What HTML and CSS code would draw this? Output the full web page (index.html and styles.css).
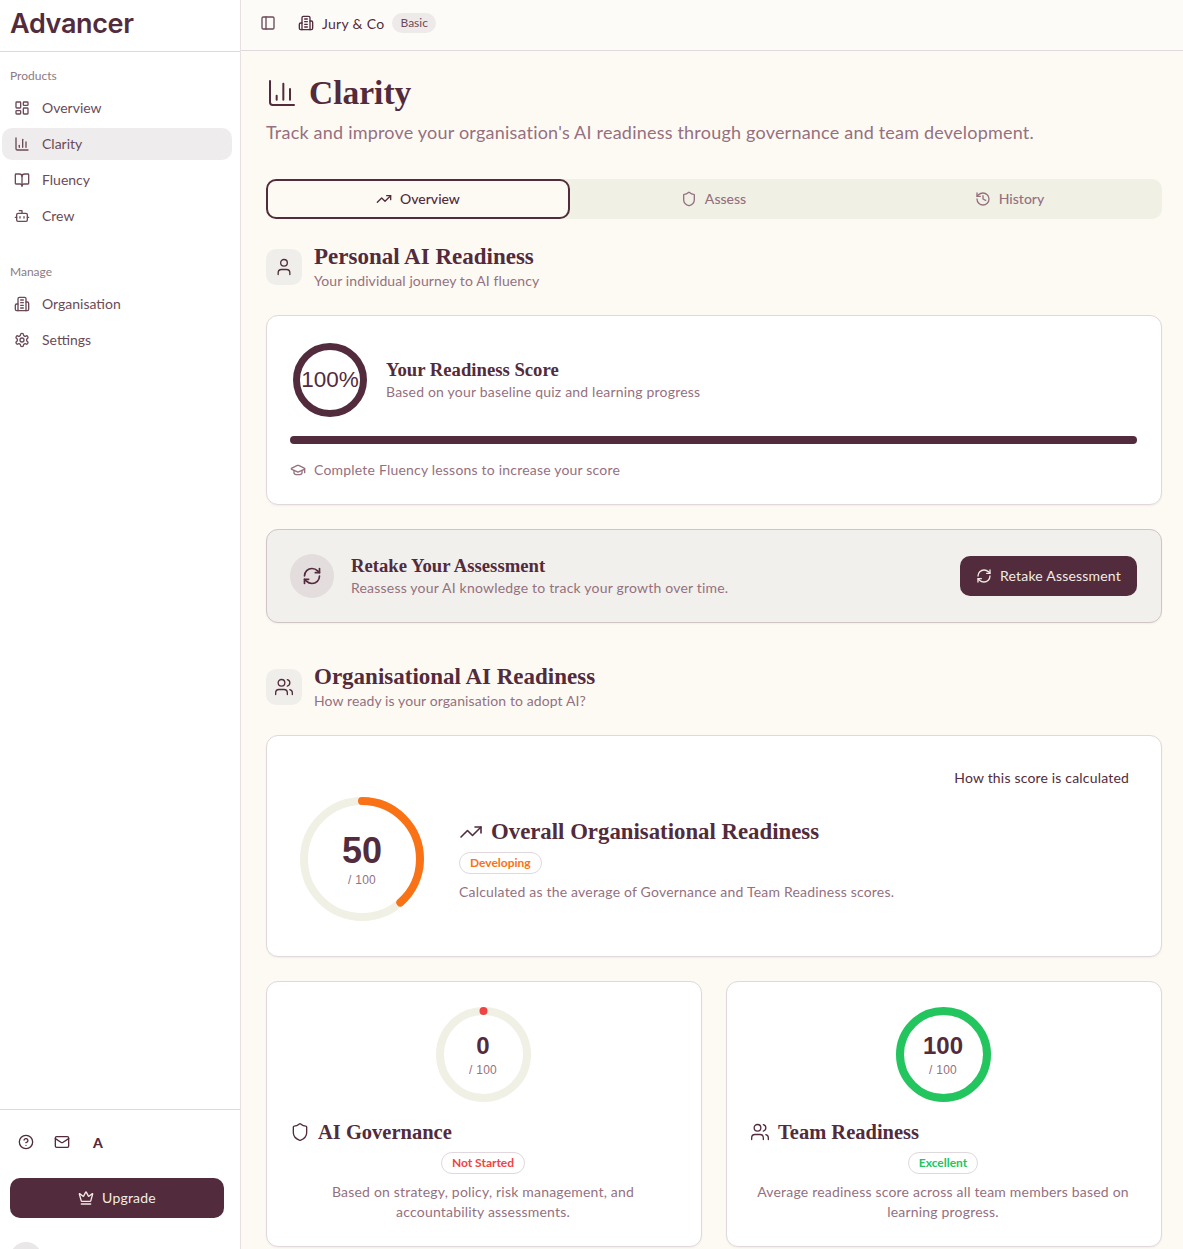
FILE: index.html
```html
<!DOCTYPE html>
<html lang="en">
<head>
<meta charset="UTF-8">
<meta name="viewport" content="width=device-width, initial-scale=1.0">
<title>Clarity - Advancer</title>
<link rel="stylesheet" href="styles.css">
</head>
<body>

<svg class="sprite" xmlns="http://www.w3.org/2000/svg">
    <symbol id="i-dashboard" viewBox="0 0 24 24"><rect width="7" height="9" x="3" y="3" rx="1"/><rect width="7" height="5" x="14" y="3" rx="1"/><rect width="7" height="9" x="14" y="12" rx="1"/><rect width="7" height="5" x="3" y="16" rx="1"/></symbol>
    <symbol id="i-chart" viewBox="0 0 24 24"><path d="M3 3v16a2 2 0 0 0 2 2h16"/><path d="M18 17V9"/><path d="M13 17V5"/><path d="M8 17v-3"/></symbol>
    <symbol id="i-book" viewBox="0 0 24 24"><path d="M12 7v14"/><path d="M3 18a1 1 0 0 1-1-1V4a1 1 0 0 1 1-1h5a4 4 0 0 1 4 4 4 4 0 0 1 4-4h5a1 1 0 0 1 1 1v13a1 1 0 0 1-1 1h-6a3 3 0 0 0-3 3 3 3 0 0 0-3-3z"/></symbol>
    <symbol id="i-bot" viewBox="0 0 24 24"><path d="M12 8V4H8"/><rect width="16" height="12" x="4" y="8" rx="2"/><path d="M2 14h2"/><path d="M20 14h2"/><path d="M15 13v2"/><path d="M9 13v2"/></symbol>
    <symbol id="i-building" viewBox="0 0 24 24"><path d="M6 22V4a2 2 0 0 1 2-2h8a2 2 0 0 1 2 2v18Z"/><path d="M6 12H4a2 2 0 0 0-2 2v6a2 2 0 0 0 2 2h2"/><path d="M18 9h2a2 2 0 0 1 2 2v9a2 2 0 0 1-2 2h-2"/><path d="M10 6h4"/><path d="M10 10h4"/><path d="M10 14h4"/><path d="M10 18h4"/></symbol>
    <symbol id="i-settings" viewBox="0 0 24 24"><path d="M12.22 2h-.44a2 2 0 0 0-2 2v.18a2 2 0 0 1-1 1.73l-.43.25a2 2 0 0 1-2 0l-.15-.08a2 2 0 0 0-2.73.73l-.22.38a2 2 0 0 0 .73 2.73l.15.1a2 2 0 0 1 1 1.72v.51a2 2 0 0 1-1 1.74l-.15.09a2 2 0 0 0-.73 2.73l.22.38a2 2 0 0 0 2.73.73l.15-.08a2 2 0 0 1 2 0l.43.25a2 2 0 0 1 1 1.73V20a2 2 0 0 0 2 2h.44a2 2 0 0 0 2-2v-.18a2 2 0 0 1 1-1.73l.43-.25a2 2 0 0 1 2 0l.15.08a2 2 0 0 0 2.73-.73l.22-.39a2 2 0 0 0-.73-2.73l-.15-.08a2 2 0 0 1-1-1.74v-.5a2 2 0 0 1 1-1.74l.15-.09a2 2 0 0 0 .73-2.73l-.22-.38a2 2 0 0 0-2.73-.73l-.15.08a2 2 0 0 1-2 0l-.43-.25a2 2 0 0 1-1-1.73V4a2 2 0 0 0-2-2z"/><circle cx="12" cy="12" r="3"/></symbol>
    <symbol id="i-panel" viewBox="0 0 24 24"><rect width="18" height="18" x="3" y="3" rx="2"/><path d="M9 3v18"/></symbol>
    <symbol id="i-trending" viewBox="0 0 24 24"><polyline points="22 7 13.5 15.5 8.5 10.5 2 17"/><polyline points="16 7 22 7 22 13"/></symbol>
    <symbol id="i-shield" viewBox="0 0 24 24"><path d="M20 13c0 5-3.5 7.5-7.66 8.95a1 1 0 0 1-.67-.01C7.5 20.5 4 18 4 13V6a1 1 0 0 1 1-1c2 0 4.5-1.2 6.24-2.72a1.17 1.17 0 0 1 1.52 0C14.51 3.81 17 5 19 5a1 1 0 0 1 1 1z"/></symbol>
    <symbol id="i-history" viewBox="0 0 24 24"><path d="M3 12a9 9 0 1 0 9-9 9.75 9.75 0 0 0-6.74 2.74L3 8"/><path d="M3 3v5h5"/><path d="M12 7v5l4 2"/></symbol>
    <symbol id="i-user" viewBox="0 0 24 24"><path d="M19 21v-2a4 4 0 0 0-4-4H9a4 4 0 0 0-4 4v2"/><circle cx="12" cy="7" r="4"/></symbol>
    <symbol id="i-users" viewBox="0 0 24 24"><path d="M16 21v-2a4 4 0 0 0-4-4H6a4 4 0 0 0-4 4v2"/><circle cx="9" cy="7" r="4"/><path d="M22 21v-2a4 4 0 0 0-3-3.87"/><path d="M16 3.13a4 4 0 0 1 0 7.75"/></symbol>
    <symbol id="i-cap" viewBox="0 0 24 24"><path d="M21.42 10.922a1 1 0 0 0-.019-1.838L12.83 5.18a2 2 0 0 0-1.66 0L2.6 9.08a1 1 0 0 0 0 1.832l8.57 3.908a2 2 0 0 0 1.66 0z"/><path d="M22 10v6"/><path d="M6 12.5V16a6 3 0 0 0 12 0v-3.5"/></symbol>
    <symbol id="i-refresh" viewBox="0 0 24 24"><path d="M3 12a9 9 0 0 1 9-9 9.75 9.75 0 0 1 6.74 2.74L21 8"/><path d="M21 3v5h-5"/><path d="M21 12a9 9 0 0 1-9 9 9.75 9.75 0 0 1-6.74-2.74L3 16"/><path d="M8 16H3v5"/></symbol>
    <symbol id="i-help" viewBox="0 0 24 24"><circle cx="12" cy="12" r="10"/><path d="M9.09 9a3 3 0 0 1 5.83 1c0 2-3 3-3 3"/><path d="M12 17h.01"/></symbol>
    <symbol id="i-mail" viewBox="0 0 24 24"><rect width="20" height="16" x="2" y="4" rx="2"/><path d="m22 7-8.97 5.7a1.94 1.94 0 0 1-2.06 0L2 7"/></symbol>
    <symbol id="i-crown" viewBox="0 0 24 24"><path d="M11.562 3.266a.5.5 0 0 1 .876 0L15.39 8.87a1 1 0 0 0 1.516.294L21.183 5.5a.5.5 0 0 1 .798.519l-2.834 10.246a1 1 0 0 1-.956.734H5.81a1 1 0 0 1-.957-.734L2.02 6.02a.5.5 0 0 1 .798-.519l4.276 3.664a1 1 0 0 0 1.516-.294z"/><path d="M5 21h14"/></symbol>
    <symbol id="i-updown" viewBox="0 0 24 24"><path d="m7 15 5 5 5-5"/><path d="m7 9 5-5 5 5"/></symbol>
</svg>

<div class="app">
    <aside class="sidebar">
        <div class="logo">Advancer</div>

        <nav class="nav">
            <div class="nav-label">Products</div>
            <a class="nav-item"><svg class="icon"><use href="#i-dashboard"/></svg>Overview</a>
            <a class="nav-item active"><svg class="icon"><use href="#i-chart"/></svg>Clarity</a>
            <a class="nav-item"><svg class="icon"><use href="#i-book"/></svg>Fluency</a>
            <a class="nav-item"><svg class="icon"><use href="#i-bot"/></svg>Crew</a>

            <div class="nav-label second">Manage</div>
            <a class="nav-item"><svg class="icon"><use href="#i-building"/></svg>Organisation</a>
            <a class="nav-item"><svg class="icon"><use href="#i-settings"/></svg>Settings</a>
        </nav>

        <div class="side-footer">
            <div class="side-tools">
                <svg class="icon"><use href="#i-help"/></svg>
                <svg class="icon"><use href="#i-mail"/></svg>
                <span class="tool-letter">A</span>
            </div>
            <button class="btn upgrade"><svg class="icon"><use href="#i-crown"/></svg>Upgrade</button>
            <div class="side-user">
                <span class="avatar"></span>
                <svg class="icon"><use href="#i-updown"/></svg>
            </div>
        </div>
    </aside>

    <div class="content">
        <header class="topbar">
            <svg class="icon"><use href="#i-panel"/></svg>
            <span class="org"><svg class="icon"><use href="#i-building"/></svg>Jury &amp; Co</span>
            <span class="plan">Basic</span>
        </header>

        <main class="main">
            <h1 class="page-title"><svg class="icon"><use href="#i-chart"/></svg>Clarity</h1>
            <p class="page-sub">Track and improve your organisation's AI readiness through governance and team development.</p>

            <div class="tabs">
                <div class="tab active"><svg class="icon"><use href="#i-trending"/></svg>Overview</div>
                <div class="tab"><svg class="icon"><use href="#i-shield"/></svg>Assess</div>
                <div class="tab"><svg class="icon"><use href="#i-history"/></svg>History</div>
            </div>

            <section class="section-head">
                <span class="section-icon"><svg class="icon"><use href="#i-user"/></svg></span>
                <div>
                    <h2>Personal AI Readiness</h2>
                    <p>Your individual journey to AI fluency</p>
                </div>
            </section>

            <div class="card personal">
                <div class="personal-top">
                    <div class="ring ring-personal">
                        <svg viewBox="0 0 74 74"><circle class="ring-fill" cx="37" cy="37" r="33.5"/></svg>
                        <div class="ring-text"><span class="ring-pct">100%</span></div>
                    </div>
                    <div class="card-text">
                        <h3>Your Readiness Score</h3>
                        <p class="muted">Based on your baseline quiz and learning progress</p>
                    </div>
                </div>
                <div class="progress"></div>
                <p class="muted note"><svg class="icon"><use href="#i-cap"/></svg>Complete Fluency lessons to increase your score</p>
            </div>

            <div class="card retake">
                <span class="retake-icon"><svg class="icon"><use href="#i-refresh"/></svg></span>
                <div class="card-text retake-text">
                    <h3>Retake Your Assessment</h3>
                    <p class="muted">Reassess your AI knowledge to track your growth over time.</p>
                </div>
                <button class="btn"><svg class="icon"><use href="#i-refresh"/></svg>Retake Assessment</button>
            </div>

            <section class="section-head org-head">
                <span class="section-icon"><svg class="icon"><use href="#i-users"/></svg></span>
                <div>
                    <h2>Organisational AI Readiness</h2>
                    <p>How ready is your organisation to adopt AI?</p>
                </div>
            </section>

            <div class="card overall">
                <div class="how">How this score is calculated</div>
                <div class="overall-body">
                    <div class="ring ring-large">
                        <svg viewBox="0 0 124 124">
                            <circle class="ring-track" cx="62" cy="62" r="58"/>
                            <circle class="ring-fill orange" cx="62" cy="62" r="58" pathLength="100" stroke-dasharray="38.5 100"/>
                        </svg>
                        <div class="ring-text"><strong>50</strong><span>/ 100</span></div>
                    </div>
                    <div>
                        <h3 class="overall-title"><svg class="icon"><use href="#i-trending"/></svg>Overall Organisational Readiness</h3>
                        <span class="pill text-orange">Developing</span>
                        <p class="muted">Calculated as the average of Governance and Team Readiness scores.</p>
                    </div>
                </div>
            </div>

            <div class="score-grid">
                <div class="card score">
                    <div class="ring ring-small">
                        <svg viewBox="0 0 95 95">
                            <circle class="ring-track" cx="47.5" cy="47.5" r="43.5"/>
                            <circle class="ring-fill red" cx="47.5" cy="47.5" r="43.5" stroke-dasharray="0 400"/>
                        </svg>
                        <div class="ring-text"><strong>0</strong><span>/ 100</span></div>
                    </div>
                    <h3 class="score-title"><svg class="icon"><use href="#i-shield"/></svg>AI Governance</h3>
                    <span class="pill text-red">Not Started</span>
                    <p class="muted">Based on strategy, policy, risk management, and accountability assessments.</p>
                </div>
                <div class="card score">
                    <div class="ring ring-small">
                        <svg viewBox="0 0 95 95">
                            <circle class="ring-track" cx="47.5" cy="47.5" r="43.5"/>
                            <circle class="ring-fill green" cx="47.5" cy="47.5" r="43.5"/>
                        </svg>
                        <div class="ring-text"><strong>100</strong><span>/ 100</span></div>
                    </div>
                    <h3 class="score-title"><svg class="icon"><use href="#i-users"/></svg>Team Readiness</h3>
                    <span class="pill text-green">Excellent</span>
                    <p class="muted">Average readiness score across all team members based on learning progress.</p>
                </div>
            </div>
        </main>
    </div>
</div>

</body>
</html>
```

FILE: styles.css
```css
* {
    box-sizing: border-box;
}
html, body {
    height: 100%;
    overflow: hidden;
}
body {
    margin: 0;
    font-family: "Lato", "Noto Sans", sans-serif;
    font-size: 14px;
    color: #522b3c;
    background: #fdfaf4;
}
h1, h2, h3, p {
    margin: 0;
}
h1, h2, h3 {
    font-family: "Liberation Serif", serif;
    font-weight: 700;
}
.sprite {
    display: none;
}
.icon {
    width: 16px;
    height: 16px;
    flex: none;
    fill: none;
    stroke: currentColor;
    stroke-width: 2;
    stroke-linecap: round;
    stroke-linejoin: round;
}
.muted {
    color: #95707f;
    font-size: 14px;
    letter-spacing: .2px;
}

.app {
    display: flex;
    height: 100vh;
    overflow: hidden;
}

/* sidebar */
.sidebar {
    width: 241px;
    flex: none;
    height: 1282px;
    display: flex;
    flex-direction: column;
    background: #fff;
    border-right: 1px solid #e6e0e3;
}
.logo {
    height: 52px;
    padding: 6px 0 0 10px;
    border-bottom: 1px solid #e0d8dc;
    font-family: "Inter", sans-serif;
    font-size: 27px;
    font-weight: 600;
    letter-spacing: -.35px;
    line-height: 36px;
}
.nav {
    flex: 1;
    padding: 16px 8px 0 2px;
}
.nav-label {
    height: 16px;
    padding-left: 8px;
    margin-bottom: 8px;
    font-size: 12px;
    line-height: 16px;
    color: #8d7a83;
}
.nav-label.second {
    margin-top: 32px;
}
.nav-item {
    display: flex;
    align-items: center;
    gap: 12px;
    height: 32px;
    margin-bottom: 4px;
    padding: 0 0 2px 12px;
    border-radius: 10px;
    color: #6b4a58;
}
.nav-item .icon {
    margin-top: 2px;
}
.nav-item.active {
    background: #eeecec;
}
.side-footer {
    border-top: 1px solid #e0d8dc;
    padding: 24px 16px 0 10px;
}
.side-tools {
    display: flex;
    align-items: center;
    height: 16px;
    padding-left: 8px;
    margin-bottom: 28px;
    gap: 20px;
}
.tool-letter {
    font-size: 14px;
    font-weight: 900;
    margin-left: 3px;
}
.side-user {
    display: flex;
    align-items: center;
    justify-content: space-between;
    height: 48px;
    margin-top: 16px;
    color: #522b3c;
}
.avatar {
    width: 32px;
    height: 32px;
    border-radius: 50%;
    background: #e9e7e8;
}

/* buttons */
.btn {
    display: flex;
    align-items: center;
    justify-content: center;
    gap: 8px;
    height: 40px;
    padding: 0 0 2px;
    border: 0;
    border-radius: 10px;
    background: #522b3c;
    color: #f1ebe4;
    font-family: inherit;
    font-size: 14px;
    letter-spacing: .2px;
}
.btn .icon {
    margin-top: 2px;
}
.upgrade {
    width: 214px;
}
.retake .btn {
    width: 177px;
}

/* top bar */
.content {
    flex: 1;
    min-width: 0;
}
.topbar {
    display: flex;
    align-items: center;
    height: 51px;
    padding: 0 0 4px 19px;
    border-bottom: 1px solid #e0d8dc;
    color: #6b4a58;
    background: #fdfbf8;
}
.org {
    display: flex;
    align-items: center;
    gap: 8px;
    margin-left: 22px;
    color: #522b3c;
    letter-spacing: .3px;
}
.plan {
    margin-left: 8px;
    padding: 0 8px;
    height: 20px;
    line-height: 20px;
    border-radius: 10px;
    font-size: 12px;
    background: #efeaea;
}

/* main */
.main {
    padding: 24px 21px 0 25px;
}
.page-title {
    display: flex;
    align-items: center;
    gap: 11px;
    height: 36px;
    font-size: 33.5px;
    line-height: 36px;
}
.page-title .icon {
    width: 32px;
    height: 32px;
    stroke-width: 1.5;
}
.page-sub {
    margin-top: 7px;
    font-size: 18px;
    line-height: 28px;
    letter-spacing: .21px;
    color: #95707f;
}
.tabs {
    display: grid;
    grid-template-columns: 304px 1fr 305px;
    height: 40px;
    margin-top: 33px;
    background: #f0f0e5;
    border-radius: 10px;
}
.tab {
    display: flex;
    align-items: center;
    justify-content: center;
    gap: 8px;
    padding-bottom: 2px;
    color: #95707f;
    font-weight: 500;
    border-radius: 10px;
}
.tab .icon {
    margin-top: 2px;
}
.tab.active {
    background: #fdfaf4;
    border: 2px solid #522b3c;
    color: #522b3c;
}

.section-head {
    display: flex;
    gap: 12px;
    margin-top: 24px;
    height: 48px;
}
.section-head h2 {
    font-size: 23px;
    line-height: 28px;
}
.section-head p {
    color: #95707f;
    line-height: 20px;
    letter-spacing: .1px;
}
.section-icon {
    width: 36px;
    height: 36px;
    margin-top: 6px;
    display: flex;
    align-items: center;
    justify-content: center;
    border-radius: 10px;
    background: #efeeea;
}
.section-icon .icon {
    width: 20px;
    height: 20px;
    stroke-width: 1.6;
}

.card {
    background: #fff;
    border: 1px solid #e0d8dc;
    border-radius: 12px;
    box-shadow: 0 1px 2px rgba(0,0,0,0.05);
}
.card h3 {
    font-size: 18.7px;
    line-height: 24px;
}
.card-text {
    padding-bottom: 3px;
}
.card-text h3 {
    margin-bottom: 1px;
}

.ring {
    display: grid;
    flex: none;
}
.ring svg, .ring-text {
    grid-area: 1 / 1;
}
.ring svg {
    width: 100%;
    height: 100%;
    transform: rotate(-90deg);
    fill: none;
}
.ring-text {
    display: flex;
    flex-direction: column;
    align-items: center;
    justify-content: center;
    font-family: "Liberation Sans", sans-serif;
}
.ring-text strong {
    font-weight: 700;
}
.ring-text span {
    color: #95707f;
    font-size: 12px;
    letter-spacing: .3px;
}
.ring-track {
    stroke: #f0f0e5;
    stroke-width: 8;
}
.ring-fill {
    stroke: #522b3c;
    stroke-width: 7;
    stroke-linecap: round;
}
.ring-fill.orange {
    stroke: #f97316;
    stroke-width: 8;
}
.ring-fill.red {
    stroke: #ef4444;
    stroke-width: 8;
}
.ring-fill.green {
    stroke: #22c55e;
    stroke-width: 8;
}

/* personal score */
.personal {
    height: 190px;
    margin-top: 24px;
    padding: 27px 24px 0 23px;
}
.personal-top {
    display: flex;
    align-items: center;
    gap: 19px;
    padding-left: 3px;
}
.ring-personal {
    width: 74px;
    height: 74px;
}
.ring-text .ring-pct {
    font-size: 22.5px;
    letter-spacing: 0;
    color: #522b3c;
}
.progress {
    height: 8px;
    margin-top: 19px;
    border-radius: 4px;
    background: #522b3c;
}
.note {
    display: flex;
    align-items: center;
    gap: 8px;
    margin-top: 16px;
    line-height: 20px;
}

/* retake */
.retake {
    display: flex;
    align-items: center;
    gap: 17px;
    height: 94px;
    margin-top: 24px;
    padding: 0 24px 0 23px;
    background: #f1f0ec;
    border-color: #cfc4c6;
}
.retake-icon {
    width: 44px;
    height: 44px;
    display: flex;
    align-items: center;
    justify-content: center;
    border-radius: 50%;
    background: #e3dddd;
}
.retake-icon .icon {
    width: 20px;
    height: 20px;
}
.retake-text {
    flex: 1;
}

.org-head {
    margin-top: 40px;
}
.overall {
    height: 222px;
    margin-top: 24px;
    padding: 32px 32px 0 33px;
}
.how {
    text-align: right;
    line-height: 20px;
    letter-spacing: .18px;
    color: #522b3c;
}
.overall-body {
    display: flex;
    align-items: center;
    gap: 35px;
    margin-top: 9px;
}
.ring-large {
    width: 124px;
    height: 124px;
}
.ring-large strong {
    font-size: 36px;
    line-height: 40px;
    margin-bottom: 2px;
}
.overall-title {
    display: flex;
    align-items: center;
    gap: 8px;
}
.card .overall-title {
    font-size: 22.8px;
    line-height: 28px;
}
.overall-title .icon {
    width: 24px;
    height: 24px;
    stroke-width: 1.6;
}
.overall .pill {
    margin-bottom: 9px;
}
.pill {
    display: inline-block;
    height: 22px;
    line-height: 20px;
    margin: 6px 0 8px;
    padding: 0 10px;
    border: 1px solid #e0d8dc;
    border-radius: 11px;
    font-size: 12px;
    font-weight: 700;
}
.text-orange { color: #f97316; }
.text-red { color: #ef4444; }
.text-green { color: #22c55e; }

.score-grid {
    display: grid;
    grid-template-columns: 1fr 1fr;
    gap: 24px;
    margin-top: 24px;
}
.score {
    height: 266px;
    padding: 25px 25px 0 23px;
    display: flex;
    flex-direction: column;
    align-items: center;
    text-align: center;
}
.score p {
    line-height: 20px;
}
.ring-small {
    width: 95px;
    height: 95px;
}
.ring-small strong {
    font-size: 24px;
    line-height: 28px;
    margin-bottom: 3px;
}
.score-title {
    display: flex;
    align-items: center;
    gap: 8px;
    align-self: flex-start;
    margin-top: 16px;
}
.card .score-title {
    font-size: 20.5px;
    line-height: 28px;
}
.score-title .icon {
    width: 20px;
    height: 20px;
    stroke-width: 1.6;
}
```
